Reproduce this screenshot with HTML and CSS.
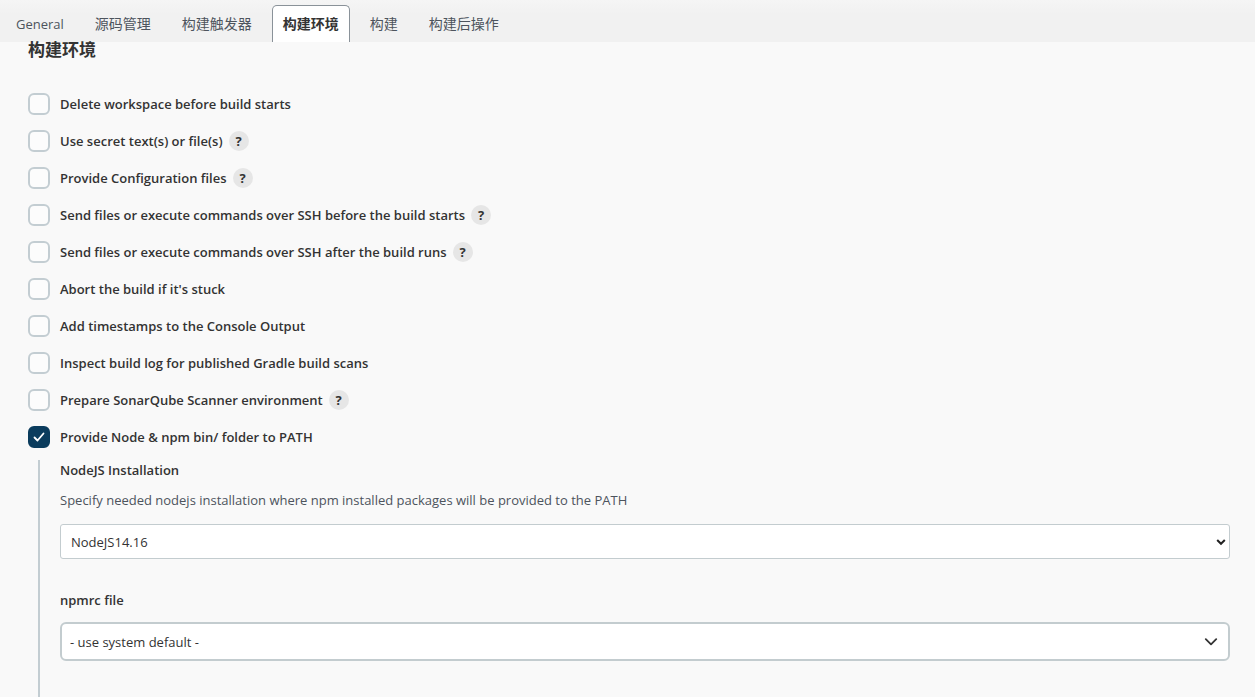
FILE: index.html
```html
<!DOCTYPE html>
<html lang="zh-CN">
<head>
<meta charset="utf-8">
<title>构建环境</title>
<link rel="stylesheet" href="styles.css">
</head>
<body>
<nav class="tabs">
  <a class="tab tab-latin" href="#general">General</a>
  <a class="tab" href="#scm">源码管理</a>
  <a class="tab" href="#triggers">构建触发器</a>
  <a class="tab tab-active" href="#environment">构建环境</a>
  <a class="tab" href="#build">构建</a>
  <a class="tab" href="#post">构建后操作</a>
</nav>
<main class="config" id="environment">
  <h1 class="section-title">构建环境</h1>
  <div class="options">
    <div class="option"><input class="check" type="checkbox" id="o1"><label for="o1">Delete workspace before build starts</label></div>
    <div class="option"><input class="check" type="checkbox" id="o2"><label for="o2">Use secret text(s) or file(s)</label><button class="help" type="button">?</button></div>
    <div class="option"><input class="check" type="checkbox" id="o3"><label for="o3">Provide Configuration files</label><button class="help" type="button">?</button></div>
    <div class="option"><input class="check" type="checkbox" id="o4"><label for="o4">Send files or execute commands over SSH before the build starts</label><button class="help" type="button">?</button></div>
    <div class="option"><input class="check" type="checkbox" id="o5"><label for="o5">Send files or execute commands over SSH after the build runs</label><button class="help" type="button">?</button></div>
    <div class="option"><input class="check" type="checkbox" id="o6"><label for="o6">Abort the build if it's stuck</label></div>
    <div class="option"><input class="check" type="checkbox" id="o7"><label for="o7">Add timestamps to the Console Output</label></div>
    <div class="option"><input class="check" type="checkbox" id="o8"><label for="o8">Inspect build log for published Gradle build scans</label></div>
    <div class="option"><input class="check" type="checkbox" id="o9"><label for="o9">Prepare SonarQube Scanner environment</label><button class="help" type="button">?</button></div>
    <div class="option"><input class="check" type="checkbox" id="o10" checked><label for="o10">Provide Node &amp; npm bin/ folder to PATH</label></div>
  </div>
  <div class="nested">
    <label class="field-label" for="node">NodeJS Installation</label>
    <p class="description">Specify needed nodejs installation where npm installed packages will be provided to the PATH</p>
    <div class="select-wrap">
      <select class="select" id="node"><option>NodeJS14.16</option></select>
      <svg class="arrow" width="10" height="8" viewBox="0 0 10 8" aria-hidden="true"><path d="M1.2 2L5 5.8L8.8 2" fill="none" stroke="#222" stroke-width="2"/></svg>
    </div>
    <label class="field-label field-next" for="npmrc">npmrc file</label>
    <div class="select-wrap">
      <select class="select select-large" id="npmrc"><option>- use system default -</option></select>
      <svg class="arrow arrow-large" width="14" height="8" viewBox="0 0 14 8" aria-hidden="true"><path d="M1.8 1.2L7 6.4L12.2 1.2" fill="none" stroke="#333" stroke-width="1.8" stroke-linecap="round" stroke-linejoin="round"/></svg>
    </div>
  </div>
</main>
</body>
</html>
```
FILE: styles.css
```css
* { box-sizing: border-box; }
body {
  margin: 0;
  min-height: 100vh;
  display: flex;
  flex-direction: column;
  background: #f9f9f9;
  color: #333;
  font: 13px/20px "Open Sans", "Noto Sans CJK SC", sans-serif;
}
.tabs {
  display: flex;
  align-items: flex-end;
  height: 42px;
  flex: none;
  padding-left: 5px;
  background: linear-gradient(#f5f5f5, #f1f1f1 14px);
}
.tab {
  height: 37px;
  padding: 9px 11px 0;
  margin-right: 9px;
  border: 0 solid #8a9299;
  color: #4d545d;
  font-size: 14px;
  text-decoration: none;
}
.tab-latin { font-size: 13px; }
.tab-active {
  border-width: 1px 1px 0;
  padding: 8px 10px 0;
  border-radius: 5px 5px 0 0;
  background: #fff;
  color: #333;
  font-weight: 700;
}
.config {
  flex: 1;
  display: flex;
  flex-direction: column;
  padding: 0 25px 0 28px;
}
.section-title {
  margin: 0 0 35px;
  font-size: 17px;
  line-height: 16px;
  font-weight: 700;
}
.options { display: grid; gap: 15px; }
.option {
  display: flex;
  align-items: center;
  height: 22px;
  font-weight: 600;
}
.check {
  appearance: none;
  width: 22px;
  height: 22px;
  margin: 0 10px 0 0;
  border: 2px solid #c3cdd2;
  border-radius: 6px;
  background: #fcfcfc;
}
.check:checked {
  border-color: #0b3c5d;
  background: #0b3c5d url("data:image/svg+xml,%3Csvg xmlns='http://www.w3.org/2000/svg' viewBox='0 0 18 18'%3E%3Cpath d='M4.5 9.5L7.5 12.5L13.5 5.5' fill='none' stroke='white' stroke-width='1.8' stroke-linecap='round' stroke-linejoin='round'/%3E%3C/svg%3E") center / 18px no-repeat;
}
.help {
  width: 20px;
  height: 20px;
  margin-left: 6px;
  padding: 0;
  border: 0;
  border-radius: 50%;
  background: #e6e6e6;
  color: #333;
  font: 700 13px/20px "Open Sans", sans-serif;
}
.nested {
  flex: 1;
  display: flex;
  flex-direction: column;
  margin: 12px 0 0 10px;
  padding-left: 20px;
  border-left: 2px solid #c3cdd2;
}
.field-label { font-weight: 600; }
.description { margin: 10px 0 14px; color: #4d545d; }
.select-wrap { position: relative; display: grid; }
.select {
  appearance: none;
  height: 35px;
  padding: 0 10px;
  border: 1px solid #c3cccf;
  border-radius: 3px;
  background: #fff;
  color: #333;
  font: inherit;
}
.select-large {
  height: 39px;
  padding: 0 8px;
  border-width: 2px;
  border-radius: 6px;
}
.arrow {
  position: absolute;
  right: 4px;
  top: 50%;
  transform: translateY(-50%);
  pointer-events: none;
}
.arrow-large { right: 12px; }
.field-next { margin: 31px 0 12px; }
```
